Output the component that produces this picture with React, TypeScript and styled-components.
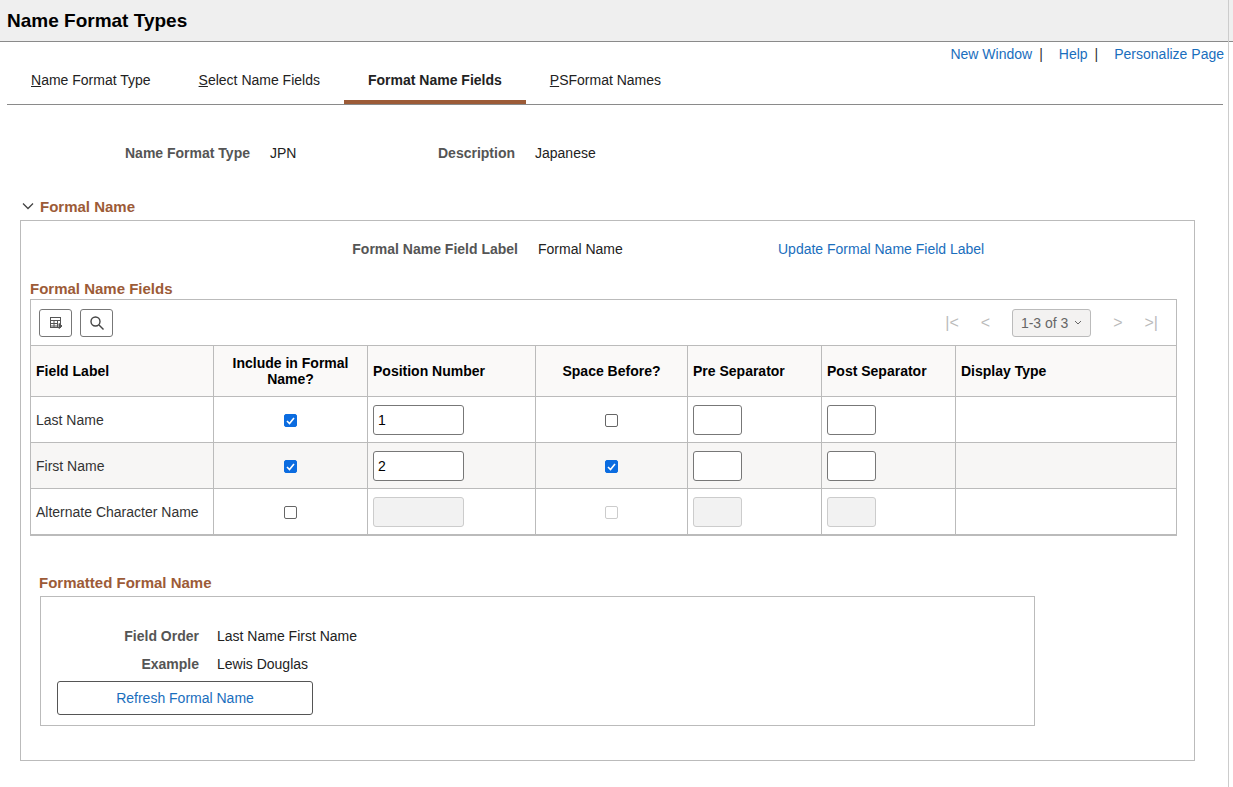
import styled, { createGlobalStyle } from "styled-components";

const Global = createGlobalStyle`
  body { margin: 0; font-family: "Liberation Sans", Arial, sans-serif; font-size: 14px; color: #333; background: #fff; }
`;

const Header = styled.div`
  height: 42px; background: #efefef; border-bottom: 1px solid #8a8a8a;
  display: flex; align-items: center; padding-left: 7px; box-sizing: border-box;
  font-size: 19px; font-weight: bold; color: #000;
`;

const TopLinks = styled.div`
  display: flex; justify-content: flex-end; padding: 2px 9px 0 0; height: 20px; align-items: center;
  a { color: #1a6ebd; text-decoration: none; font-size: 14px; }
  span { color: #333; margin: 0 16px 0 7px; }
`;

const Tabs = styled.div`
  display: flex; margin: 0 10px 0 7px; border-bottom: 1px solid #8a8a8a; height: 40px;
`;

const Tab = styled.div<{ $active?: boolean }>`
  padding: 8px 24px 0; font-size: 14px; color: #222; box-sizing: border-box;
  font-weight: ${p => (p.$active ? "bold" : "normal")};
  border-bottom: ${p => (p.$active ? "4px solid #9c5b37" : "4px solid transparent")};
  u { text-decoration: underline; }
`;

const InfoRow = styled.div`
  display: flex; align-items: center; margin-top: 39px; height: 18px;
`;

const Label = styled.div<{ $w: number }>`
  width: ${p => p.$w}px; text-align: right; font-weight: bold; color: #555; flex-shrink: 0;
`;

const Value = styled.div<{ $w?: number }>`
  margin-left: 20px; width: ${p => (p.$w ? `${p.$w}px` : "auto")}; color: #222;
`;

const SectionTitle = styled.div`
  display: flex; align-items: center; gap: 6px; margin: 34px 0 0 22px;
  font-size: 15px; font-weight: bold; color: #9c5b37; height: 20px;
`;

const Box = styled.div`
  margin: 4px 38px 0 20px; border: 1px solid #bbb; height: 541px; box-sizing: border-box;
  padding: 19px 0 0 9px;
`;

const SubTitle = styled.div<{ $ml?: number }>`
  font-size: 15px; font-weight: bold; color: #9c5b37; margin-left: ${p => p.$ml ?? 0}px; height: 18px;
`;

const Grid = styled.div`
  width: 1147px; border: 1px solid #bbb; border-bottom-width: 2px; box-sizing: border-box; margin-top: 1px;
`;

const Toolbar = styled.div`
  height: 45px; display: flex; align-items: center; padding: 0 8px; gap: 8px;
`;

const IconBtn = styled.div`
  width: 33px; height: 28px; border: 1px solid #777; border-radius: 3px; box-sizing: border-box;
  display: flex; align-items: center; justify-content: center; color: #444;
`;

const Pager = styled.div`
  margin-left: auto; display: flex; align-items: center; gap: 22px; color: #bbb; font-size: 16px; padding-right: 10px;
`;

const PageSelect = styled.div`
  width: 79px; height: 28px; border: 1px solid #bbb; border-radius: 3px; background: #f3f2f1;
  box-sizing: border-box; display: flex; align-items: center; justify-content: center; gap: 6px;
  color: #666; font-size: 14px;
`;

const Table = styled.table`
  width: 100%; border-collapse: collapse;
  th, td { border: 1px solid #bbb; padding: 0 5px; }
  tr > *:first-child { border-left: none; }
  tr > *:last-child { border-right: none; }
  tr:last-child td { border-bottom: none; }
  th { height: 50px; font-weight: bold; color: #000; text-align: left; background: #faf9f8; }
  td { height: 45px; color: #333; }
`;

const Row = styled.tr<{ $alt?: boolean }>`
  background: ${p => (p.$alt ? "#f7f6f5" : "#fff")};
`;

const Cell = styled.td<{ $center?: boolean }>`
  text-align: ${p => (p.$center ? "center" : "left")};
`;

const Input = styled.div<{ $w: number; $disabled?: boolean }>`
  width: ${p => p.$w}px; height: 30px; box-sizing: border-box; border-radius: 3px;
  border: 1px solid ${p => (p.$disabled ? "#ccc" : "#777")};
  background: ${p => (p.$disabled ? "#f2f2f2" : "#fff")};
  display: flex; align-items: center; padding-left: 4px; color: #000;
`;

const Check = styled.span<{ $on?: boolean; $disabled?: boolean }>`
  display: inline-flex; width: 13px; height: 13px; box-sizing: border-box; border-radius: 2px; vertical-align: middle;
  align-items: center; justify-content: center;
  border: 1px solid ${p => (p.$on ? "#0b6ce0" : p.$disabled ? "#ccc" : "#666")};
  background: ${p => (p.$on ? "#0b6ce0" : "#fff")};
`;

const FormattedBox = styled.div`
  margin: 4px 0 0 10px; width: 995px; height: 130px; border: 1px solid #bbb; box-sizing: border-box;
  padding: 25px 0 0 16px;
`;

const KV = styled.div`
  display: flex; align-items: center; height: 28px;
`;

const Button = styled.div`
  width: 256px; height: 34px; border: 1px solid #555; border-radius: 3px; box-sizing: border-box;
  display: flex; align-items: center; justify-content: center; color: #1a6ebd; margin-top: 3px;
`;

const RightEdge = styled.div`
  position: fixed; top: 0; right: 4px; width: 1px; height: 100%; background: #ccc;
`;

const Tick = () => (
  <svg width="9" height="8" viewBox="0 0 9 8"><path d="M1 4l2.5 2.5L8 1" stroke="#fff" strokeWidth="1.6" fill="none" /></svg>
);

const Box3 = ({ on, disabled }: { on?: boolean; disabled?: boolean }) => (
  <Check $on={on} $disabled={disabled}>{on && <Tick />}</Check>
);

const rows = [
  { label: "Last Name", inc: true, pos: "1", space: false, enabled: true },
  { label: "First Name", inc: true, pos: "2", space: true, enabled: true },
  { label: "Alternate Character Name", inc: false, pos: "", space: false, enabled: false },
];

export default function App() {
  return (
    <>
      <Global />
      <Header>Name Format Types</Header>
      <TopLinks>
        <a>New Window</a><span>|</span>
        <a>Help</a><span>|</span>
        <a style={{ marginLeft: 0 }}>Personalize Page</a>
      </TopLinks>
      <Tabs>
        <Tab><u>N</u>ame Format Type</Tab>
        <Tab><u>S</u>elect Name Fields</Tab>
        <Tab $active>Format Name Fields</Tab>
        <Tab><u>P</u>SFormat Names</Tab>
      </Tabs>
      <InfoRow>
        <Label $w={250}>Name Format Type</Label>
        <Value $w={130}>JPN</Value>
        <Label $w={115}>Description</Label>
        <Value>Japanese</Value>
      </InfoRow>
      <SectionTitle>
        <svg width="12" height="8" viewBox="0 0 12 8"><path d="M1 1.5l5 5 5-5" stroke="#444" strokeWidth="1.3" fill="none" /></svg>
        Formal Name
      </SectionTitle>
      <Box>
        <InfoRow style={{ marginTop: 0 }}>
          <Label $w={488}>Formal Name Field Label</Label>
          <Value $w={240}>Formal Name</Value>
          <a style={{ color: "#1a6ebd" }}>Update Formal Name Field Label</a>
        </InfoRow>
        <SubTitle style={{ marginTop: 22 }}>Formal Name Fields</SubTitle>
        <Grid>
          <Toolbar>
            <IconBtn>
              <svg width="16" height="16" viewBox="0 0 16 16" fill="none" stroke="#555" strokeWidth="1">
                <rect x="2.5" y="2.5" width="10" height="10" /><path d="M2.5 5.5h10M2.5 8.5h7M2.5 11h7M6 5.5v7M9.5 5.5v7" />
                <path d="M11 8.5l3 2.5-3 2.5z" fill="#555" />
              </svg>
            </IconBtn>
            <IconBtn>
              <svg width="16" height="16" viewBox="0 0 16 16" fill="none" stroke="#444" strokeWidth="1.4">
                <circle cx="6.5" cy="6.5" r="4.5" /><path d="M10 10l4.5 4.5" />
              </svg>
            </IconBtn>
            <Pager>
              <span>|&lt;</span><span>&lt;</span>
              <PageSelect>1-3 of 3 <svg width="8" height="5" viewBox="0 0 8 5"><path d="M1 1l3 3 3-3" stroke="#666" fill="none" /></svg></PageSelect>
              <span>&gt;</span><span>&gt;|</span>
            </Pager>
          </Toolbar>
          <Table>
            <thead>
              <tr>
                <th style={{ width: 172 }}>Field Label</th>
                <th style={{ width: 143, textAlign: "center" }}>Include in Formal Name?</th>
                <th style={{ width: 157 }}>Position Number</th>
                <th style={{ width: 141, textAlign: "center" }}>Space Before?</th>
                <th style={{ width: 123 }}>Pre Separator</th>
                <th style={{ width: 123 }}>Post Separator</th>
                <th>Display Type</th>
              </tr>
            </thead>
            <tbody>
              {rows.map((r, i) => (
                <Row key={r.label} $alt={i === 1}>
                  <Cell>{r.label}</Cell>
                  <Cell $center><Box3 on={r.inc} /></Cell>
                  <Cell><Input $w={91} $disabled={!r.enabled}>{r.pos}</Input></Cell>
                  <Cell $center><Box3 on={r.space} disabled={!r.enabled} /></Cell>
                  <Cell><Input $w={49} $disabled={!r.enabled} /></Cell>
                  <Cell><Input $w={49} $disabled={!r.enabled} /></Cell>
                  <Cell />
                </Row>
              ))}
            </tbody>
          </Table>
        </Grid>
        <SubTitle $ml={9} style={{ marginTop: 38 }}>Formatted Formal Name</SubTitle>
        <FormattedBox>
          <KV><Label $w={142}>Field Order</Label><Value style={{ marginLeft: 18 }}>Last Name First Name</Value></KV>
          <KV><Label $w={142}>Example</Label><Value style={{ marginLeft: 18 }}>Lewis Douglas</Value></KV>
          <Button>Refresh Formal Name</Button>
        </FormattedBox>
      </Box>
      <RightEdge />
    </>
  );
}
